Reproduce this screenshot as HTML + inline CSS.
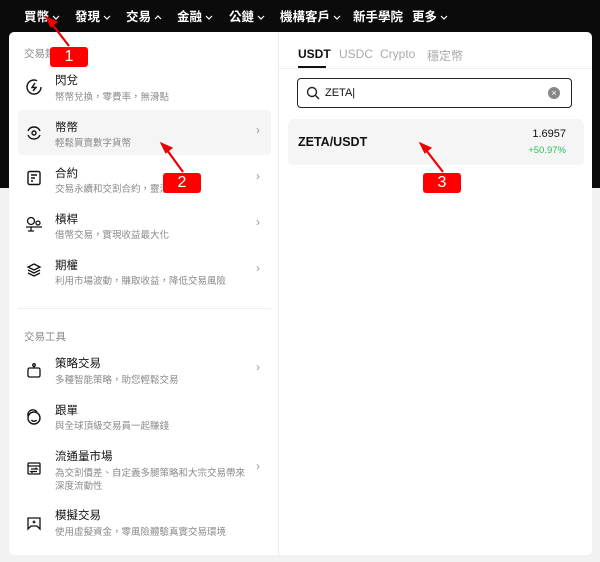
<html><head><style>
body{margin:0;width:600px;height:562px;overflow:hidden;background:#f2f2f3;font-family:"Liberation Sans","Noto Sans CJK TC",sans-serif;position:relative}
.top{position:absolute;left:0;top:0;width:600px;height:188px;background:#0b0b0b}
.nav{position:absolute;top:6px;font-size:12.5px;color:#fff;font-weight:bold}
.nav svg{margin-left:3px;vertical-align:middle}
.t{position:absolute;font-size:11.5px;color:#111}
.s{position:absolute;font-size:9.5px;color:#8a8a8a}
.h{position:absolute;font-size:10.5px;color:#888}
.ch{position:absolute;left:247px;font-size:12px;color:#999}
.ic{position:absolute;left:16px;width:18px;height:18px}
.panel{position:absolute;left:9px;top:32px;width:583px;height:523px;background:#fff;border-radius:5px}
.vd{position:absolute;left:269px;top:0;width:1px;height:523px;background:#ececec}
.badge{position:absolute;width:38px;height:20px;background:#f00;color:#fff;font-size:16px;text-align:center;line-height:20px;border-radius:3px}
</style></head><body>
<div class="top"></div>
<span class="nav" style="left:24px">買幣<svg width="8" height="5" viewBox="0 0 8 5"><path d="M1 1l3 3 3-3" stroke="#fff" stroke-width="1.2" fill="none"/></svg></span>
<span class="nav" style="left:75px">發現<svg width="8" height="5" viewBox="0 0 8 5"><path d="M1 1l3 3 3-3" stroke="#fff" stroke-width="1.2" fill="none"/></svg></span>
<span class="nav" style="left:126px">交易<svg width="8" height="5" viewBox="0 0 8 5"><path d="M1 4l3-3 3 3" stroke="#fff" stroke-width="1.2" fill="none"/></svg></span>
<span class="nav" style="left:177px">金融<svg width="8" height="5" viewBox="0 0 8 5"><path d="M1 1l3 3 3-3" stroke="#fff" stroke-width="1.2" fill="none"/></svg></span>
<span class="nav" style="left:229px">公鏈<svg width="8" height="5" viewBox="0 0 8 5"><path d="M1 1l3 3 3-3" stroke="#fff" stroke-width="1.2" fill="none"/></svg></span>
<span class="nav" style="left:280px">機構客戶<svg width="8" height="5" viewBox="0 0 8 5"><path d="M1 1l3 3 3-3" stroke="#fff" stroke-width="1.2" fill="none"/></svg></span>
<span class="nav" style="left:353px">新手學院</span>
<span class="nav" style="left:412px">更多<svg width="8" height="5" viewBox="0 0 8 5"><path d="M1 1l3 3 3-3" stroke="#fff" stroke-width="1.2" fill="none"/></svg></span>
<div class="panel">
<div class="vd"></div>
<div class="h" style="left:15px;top:14px">交易類</div>
<div style="position:absolute;left:9px;top:78px;width:253px;height:45px;background:#f5f5f5;border-radius:4px"></div>
<svg class="ic" style="top:46px" viewBox="0 0 18 18" fill="none" stroke="#111" stroke-width="1.4"><circle cx="9" cy="9" r="7" stroke-dasharray="36 8"/><path d="M10 5L7 9.5h4L8 13"/></svg>
<div class="t" style="left:46px;top:40px">閃兌</div><div class="s" style="left:46px;top:57px">幣幣兌換，零費率，無滑點</div>
<svg class="ic" style="top:92px" viewBox="0 0 18 18" fill="none" stroke="#111" stroke-width="1.4"><path d="M3 7a6.5 6.5 0 0 1 12 0M15 11a6.5 6.5 0 0 1-12 0"/><circle cx="9" cy="9" r="2"/></svg>
<div class="t" style="left:46px;top:87px">幣幣</div><div class="s" style="left:46px;top:103px">輕鬆買賣數字貨幣</div><div class="ch" style="top:91px">›</div>
<svg class="ic" style="top:137px" viewBox="0 0 18 18" fill="none" stroke="#111" stroke-width="1.4"><rect x="3" y="2.5" width="12" height="13" rx="1.5"/><path d="M6 6h6M6 9h4M6 12h2"/></svg>
<div class="t" style="left:46px;top:133px">合約</div><div class="s" style="left:46px;top:149px">交易永續和交割合約，靈活槓桿</div><div class="ch" style="top:137px">›</div>
<svg class="ic" style="top:183px" viewBox="0 0 18 18" fill="none" stroke="#111" stroke-width="1.3"><circle cx="6" cy="6" r="3.5"/><circle cx="13" cy="8" r="2"/><path d="M1 12h16M6 12v4M3 16h6"/></svg>
<div class="t" style="left:46px;top:179px">槓桿</div><div class="s" style="left:46px;top:195px">借幣交易，實現收益最大化</div><div class="ch" style="top:183px">›</div>
<svg class="ic" style="top:229px" viewBox="0 0 18 18" fill="none" stroke="#111" stroke-width="1.3"><path d="M9 3l6 3-6 3-6-3zM3 9l6 3 6-3M3 12l6 3 6-3"/></svg>
<div class="t" style="left:46px;top:225px">期權</div><div class="s" style="left:46px;top:241px">利用市場波動，賺取收益，降低交易風險</div><div class="ch" style="top:229px">›</div>
<div style="position:absolute;left:9px;top:276px;width:253px;height:1px;background:#eee"></div>
<div class="h" style="left:15px;top:297px">交易工具</div>
<svg class="ic" style="top:330px" viewBox="0 0 18 18" fill="none" stroke="#111" stroke-width="1.3"><rect x="3" y="6" width="12" height="9" rx="1.5"/><circle cx="9" cy="3" r="1.3"/><path d="M9 4.3V6M6.5 10h.1M11.5 10h.1"/></svg>
<div class="t" style="left:46px;top:323px">策略交易</div><div class="s" style="left:46px;top:340px">多種智能策略，助您輕鬆交易</div><div class="ch" style="top:328px">›</div>
<svg class="ic" style="top:376px" viewBox="0 0 18 18" fill="none" stroke="#111" stroke-width="1.4"><circle cx="9" cy="10" r="6"/><path d="M3 8a5 5 0 0 1 9-4M6.5 12a3 3 0 0 0 5 0"/></svg>
<div class="t" style="left:46px;top:370px">跟單</div><div class="s" style="left:46px;top:386px">與全球頂級交易員一起賺錢</div>
<svg class="ic" style="top:427px" viewBox="0 0 18 18" fill="none" stroke="#111" stroke-width="1.3"><rect x="3" y="4" width="12" height="11" rx="1"/><path d="M3 7h12M6 10h6l-1.5-1.2M12 12.5H6l1.5 1.2"/></svg>
<div class="t" style="left:46px;top:416px">流通量市場</div><div class="s" style="left:46px;top:433px">為交割價差、自定義多腿策略和大宗交易帶來</div><div class="s" style="left:46px;top:446px">深度流動性</div><div class="ch" style="top:427px">›</div>
<svg class="ic" style="top:482px" viewBox="0 0 18 18" fill="none" stroke="#111" stroke-width="1.3"><path d="M3 4h12v11l-3-3H6l-3 3zM9 6.5v3M7.5 8h3"/></svg>
<div class="t" style="left:46px;top:475px">模擬交易</div><div class="s" style="left:46px;top:492px">使用虛擬資金，零風險體驗真實交易環境</div>
<div style="position:absolute;left:270px;top:36px;width:313px;height:1px;background:#eee"></div>
<div style="position:absolute;left:289px;top:15px;font-size:12px;color:#111;font-weight:bold">USDT</div>
<div style="position:absolute;left:289px;top:34px;width:28px;height:2px;background:#111"></div>
<div style="position:absolute;left:330px;top:15px;font-size:12px;color:#aaa">USDC</div>
<div style="position:absolute;left:371px;top:15px;font-size:12px;color:#aaa">Crypto</div>
<div style="position:absolute;left:418px;top:15px;font-size:12px;color:#aaa">穩定幣</div>
<div style="position:absolute;left:288px;top:46px;width:273px;height:28px;border:1.3px solid #222;border-radius:4px"></div>
<svg style="position:absolute;left:297px;top:54px" width="14" height="14" viewBox="0 0 14 14" fill="none" stroke="#222" stroke-width="1.4"><circle cx="6" cy="6" r="4.5"/><path d="M9.5 9.5L13 13"/></svg>
<div style="position:absolute;left:316px;top:55px;font-size:11px;color:#111">ZETA|</div>
<div style="position:absolute;left:539px;top:55px;width:12px;height:12px;border-radius:50%;background:#888;color:#fff;font-size:9px;text-align:center;line-height:12px">×</div>
<div style="position:absolute;left:279px;top:87px;width:296px;height:46px;background:#f5f5f5;border-radius:5px"></div>
<div style="position:absolute;left:289px;top:103px;font-size:12.5px;color:#111;font-weight:bold">ZETA/USDT</div>
<div style="position:absolute;right:26px;top:96px;font-size:11px;color:#111">1.6957</div>
<div style="position:absolute;right:26px;top:113px;font-size:9.5px;color:#2ebd60">+50.97%</div>
</div>
<svg style="position:absolute;left:0;top:0" width="600" height="562"><g stroke="#e00" stroke-width="2.2" fill="#e00"><line x1="69" y1="46" x2="52" y2="24"/><path d="M47 18l9 4-5 4z"/><line x1="183" y1="172" x2="167" y2="150"/><path d="M162 144l9 4-5 4z"/><line x1="443" y1="172" x2="426" y2="150"/><path d="M421 144l9 4-5 4z"/></g></svg>
<div class="badge" style="left:50px;top:47px">1</div>
<div class="badge" style="left:163px;top:173px">2</div>
<div class="badge" style="left:423px;top:173px">3</div>
</body></html>
